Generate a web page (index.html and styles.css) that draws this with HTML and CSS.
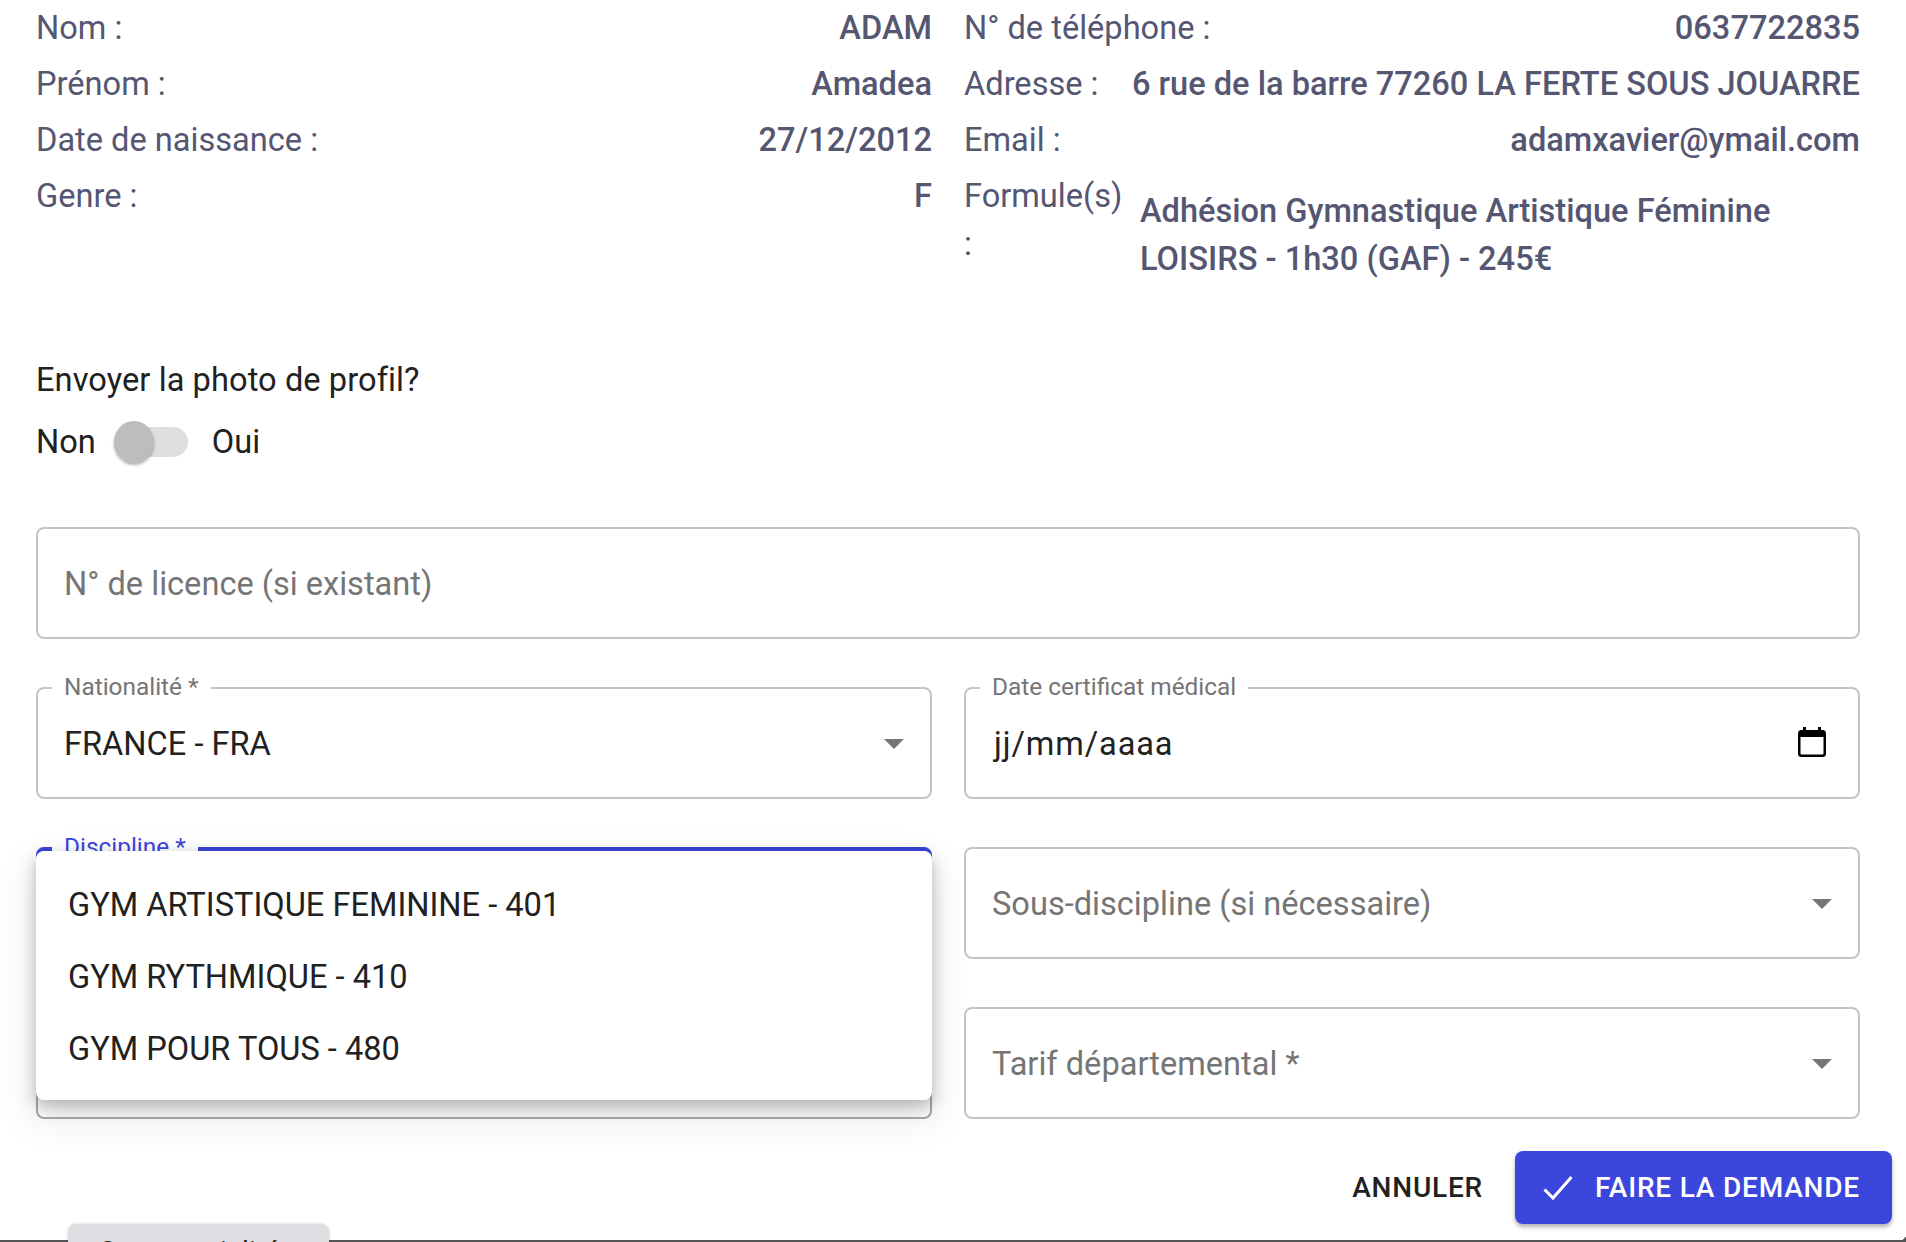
FILE: index.html
```html
<!DOCTYPE html>
<html lang="fr">
<head>
<meta charset="utf-8">
<title>Demande de licence</title>
<link rel="stylesheet" href="styles.css">
</head>
<body>
<div class="page">
  <section class="info">
    <div class="info-col">
      <div class="row"><span>Nom :</span><b>ADAM</b></div>
      <div class="row"><span>Prénom :</span><b>Amadea</b></div>
      <div class="row"><span>Date de naissance :</span><b>27/12/2012</b></div>
      <div class="row"><span>Genre :</span><b>F</b></div>
    </div>
    <div class="info-col">
      <div class="row"><span>N° de téléphone :</span><b>0637722835</b></div>
      <div class="row"><span>Adresse :</span><b>6 rue de la barre 77260 LA FERTE SOUS JOUARRE</b></div>
      <div class="row"><span>Email :</span><b>adamxavier@ymail.com</b></div>
      <div class="row formula"><span class="formula-label">Formule(s) :</span><b class="formula-value">Adhésion Gymnastique Artistique Féminine LOISIRS - 1h30 (GAF) - 245€</b></div>
    </div>
  </section>

  <section class="photo">
    <p class="photo-q">Envoyer la photo de profil?</p>
    <div class="switch-row">
      <span>Non</span>
      <span class="switch"><span class="track"></span><span class="thumb"></span></span>
      <span>Oui</span>
    </div>
  </section>

  <section class="form">
    <div class="field wide"><span class="placeholder">N° de licence (si existant)</span></div>
    <div class="field">
      <span class="legend">Nationalité *</span>
      <span class="value">FRANCE - FRA</span>
      <svg class="arrow" viewBox="0 0 20 10"><path d="M0 0h20L10 10z"/></svg>
    </div>
    <div class="field">
      <span class="legend">Date certificat médical</span>
      <span class="value date">jj/mm/aaaa</span>
      <svg class="cal" viewBox="0 0 28 30"><path d="M5 0h3v3h12V0h3v3h1.500A3.500 3.500 0 0 1 28 6.500v20a3.500 3.500 0 0 1-3.500 3.500h-21A3.500 3.500 0 0 1 0 26.500v-20A3.500 3.500 0 0 1 3.500 3H5zM2.500 10v16.500a1 1 0 0 0 1 1h21a1 1 0 0 0 1-1V10z"/></svg>
    </div>
    <div class="field focused">
      <span class="legend">Discipline *</span>
      <div class="menu">
        <div class="menu-item">GYM ARTISTIQUE FEMININE - 401</div>
        <div class="menu-item">GYM RYTHMIQUE - 410</div>
        <div class="menu-item">GYM POUR TOUS - 480</div>
      </div>
    </div>
    <div class="field">
      <span class="placeholder">Sous-discipline (si nécessaire)</span>
      <svg class="arrow" viewBox="0 0 20 10"><path d="M0 0h20L10 10z"/></svg>
    </div>
    <div class="field shaded"></div>
    <div class="field">
      <span class="placeholder">Tarif départemental *</span>
      <svg class="arrow" viewBox="0 0 20 10"><path d="M0 0h20L10 10z"/></svg>
    </div>
  </section>

  <section class="actions">
    <button class="btn-text" type="button">ANNULER</button>
    <button class="btn-primary" type="button">
      <svg class="check" viewBox="0 0 30 26"><path d="M1.500 14.500 10 23 28.500 2" /></svg>
      FAIRE LA DEMANDE
    </button>
  </section>

  <footer class="bar"><div class="tab"><span>Commercialité</span></div></footer>
</div>
</body>
</html>
```
FILE: styles.css
```css
* { box-sizing: border-box; }
html, body { margin: 0; height: 100%; overflow: hidden; background: #fff; }
body { font-family: Roboto, "Liberation Sans", sans-serif; }
.page { width: 1906px; height: 1242px; position: relative; padding: 0 46px 0 36px; display: flex; flex-direction: column; overflow: hidden; }

.info { display: grid; grid-template-columns: 896px 896px; column-gap: 32px; font-size: 32.6px; color: #545672; height: 353px; }
.info-col { display: flex; flex-direction: column; }
.row { display: flex; justify-content: space-between; align-items: flex-start; height: 56px; line-height: 56px; white-space: nowrap; }
.row b { font-weight: 500; text-align: right; }
.formula { height: auto; white-space: normal; gap: 9px; padding-top: 4px; }
.formula-label { width: 158px; flex: none; line-height: 48px; word-spacing: 100px; }
.formula-value { text-align: left !important; line-height: 48px; padding-top: 15px; width: 720px; flex: none; }

.photo { color: #212121; font-size: 32.6px; height: 174px; }
.photo-q { margin: 0; height: 54px; line-height: 54px; letter-spacing: .08px; }
.switch-row { display: flex; align-items: center; gap: 18px; height: 70px; }
.switch { position: relative; width: 74px; height: 42px; display: block; margin-right: 6px; }
.track { position: absolute; left: 2px; right: 0; top: 6px; height: 30px; border-radius: 15px; background: #dedede; }
.thumb { position: absolute; left: 0; top: 0; width: 40px; height: 42px; border-radius: 50%; background: #bdbdbd; box-shadow: 0 2px 3px rgba(0,0,0,.3); }

.form { display: grid; grid-template-columns: 896px 896px; column-gap: 32px; row-gap: 48px; grid-auto-rows: 112px; }
.field { position: relative; border: 2px solid #c4c4c4; border-radius: 8px; display: flex; align-items: center; padding: 1px 26px 0; font-size: 32.6px; background: #fff; }
.wide { grid-column: 1 / -1; }
.placeholder { color: #757575; }
.value { color: #212121; }
.date { letter-spacing: .9px; margin-left: 2px; }
.legend { position: absolute; left: 14px; top: -16px; background: #fff; padding: 0 12px; font-size: 24.4px; line-height: 28px; color: #757575; }
.arrow { position: absolute; right: 26px; top: 50%; margin-top: -4px; width: 20px; height: 10px; fill: #757575; }
.cal { position: absolute; right: 32px; top: 38px; width: 28px; height: 30px; fill: #000; }

.focused { border: 4px solid #3b46dc; }
.focused .legend { color: #3b46dc; top: -18px; left: 12px; }
.menu { position: absolute; z-index: 5; left: -4px; right: -4px; top: 0; height: 249px; background: #fff; border-radius: 8px; padding: 18px 0 0; box-shadow: 0 6px 16px rgba(0,0,0,.26), 0 16px 40px 4px rgba(0,0,0,.09); }
.menu-item { height: 72px; line-height: 72px; padding-left: 32px; color: #212121; font-size: 32.6px; }
.shaded { border-color: #aaa; }

.actions { display: flex; justify-content: flex-end; align-items: center; gap: 32px; margin: 32px -32px 0 0; }
button { font-family: inherit; font-weight: 500; letter-spacing: .8px; border: 0; }
.btn-text { background: none; color: #212121; font-size: 28px; padding: 0; }
.btn-primary { width: 377px; height: 73px; padding: 0 0 0 28px; border-radius: 8px; background: #3b46dc; color: #fff; font-size: 28px; display: flex; align-items: center; gap: 22px; box-shadow: 0 3px 4px rgba(0,0,0,.3); }
.check { width: 30px; height: 26px; fill: none; stroke: #fff; stroke-width: 3; }

.bar { position: absolute; left: 0; right: 0; bottom: 0; height: 2px; background: #555; }
.bar::after { content: ""; position: absolute; right: 0; top: -3px; width: 4px; height: 3px; background: linear-gradient(135deg, transparent 50%, #555 50%); }
.tab { position: absolute; left: 68px; top: -15px; width: 261px; height: 40px; background: #e0dde2; border-radius: 8px 8px 0 0; box-shadow: 0 -1px 3px rgba(0,0,0,.2); padding: 10px 30px; font-size: 28px; color: #212121; overflow: hidden; }
```
